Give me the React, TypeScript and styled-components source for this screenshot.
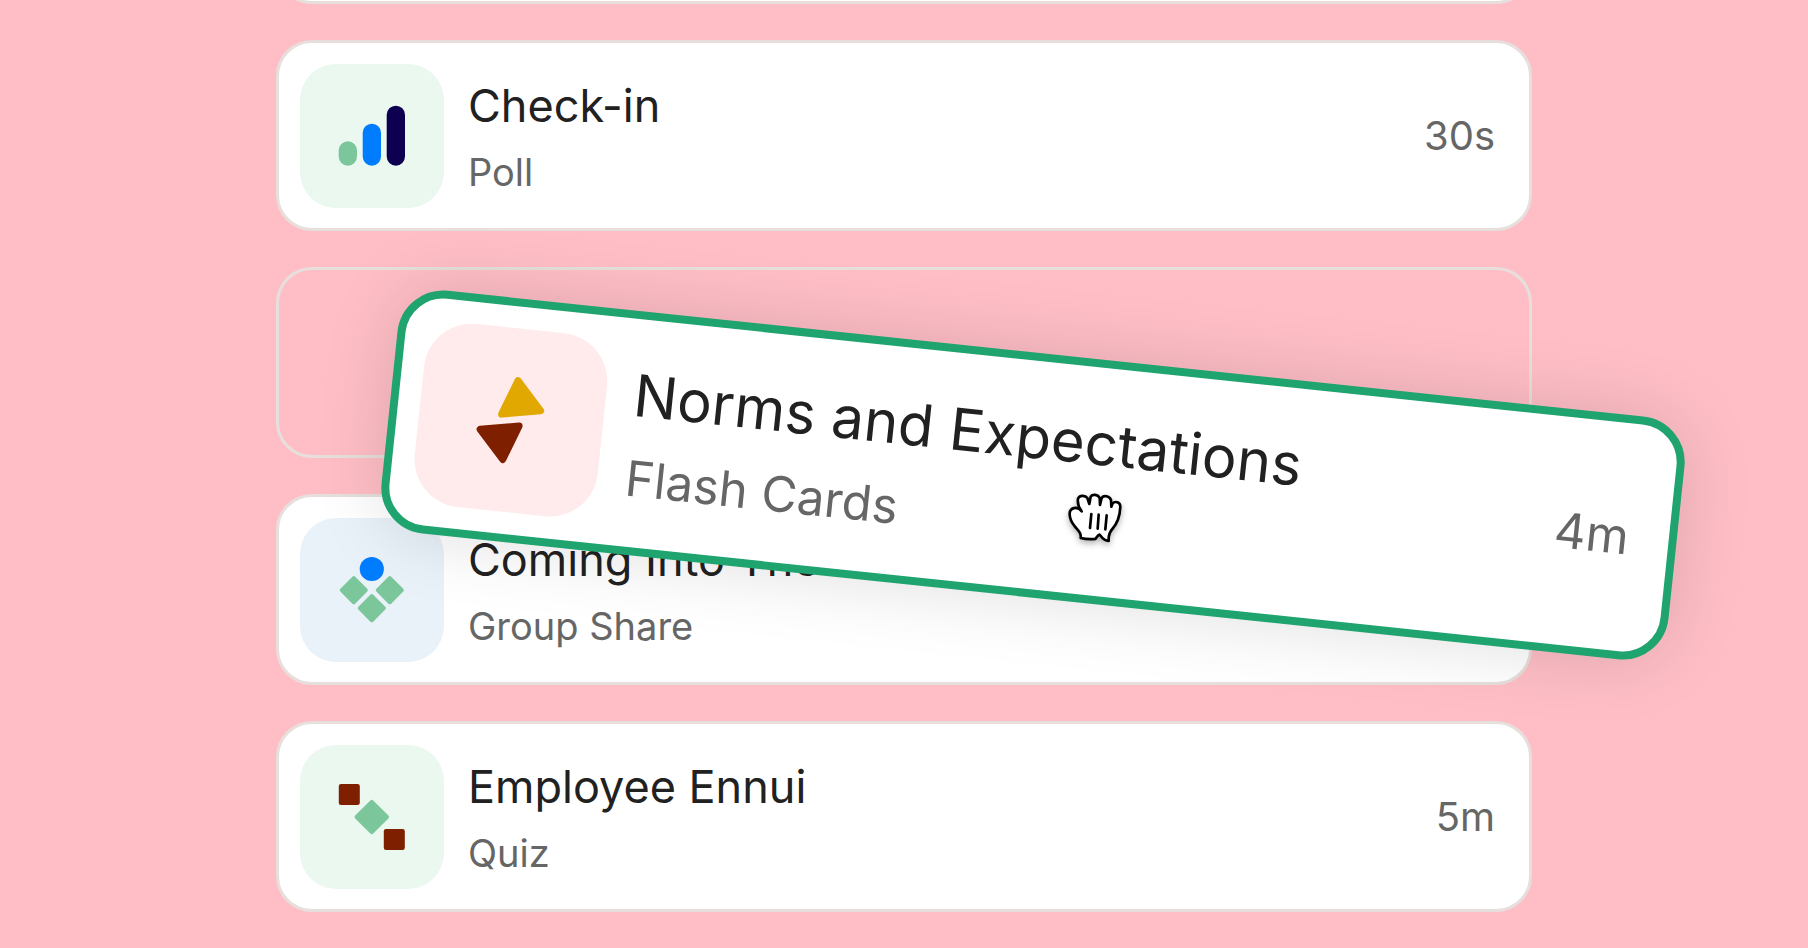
import React from "react";
import styled, { createGlobalStyle, css } from "styled-components";

const GlobalStyle = createGlobalStyle`
  *, *::before, *::after { box-sizing: border-box; }
  body {
    margin: 0;
    background: #ffbec6;
    color: #212121;
    font-family: Inter, "Liberation Sans", sans-serif;
  }
`;

const Stage = styled.main`
  display: flex;
  flex-direction: column;
  align-items: center;
  justify-content: flex-end;
  height: 100vh;
  padding-bottom: 36px;
  overflow: hidden;
`;

const AgendaList = styled.ul`
  display: flex;
  flex-direction: column;
  gap: 36px;
  width: 100%;
  max-width: 1256px;
  margin: 0;
  padding: 0;
  list-style: none;
`;

const frame = css`
  min-height: 191px;
  border: 3px solid #e6dfdc;
  border-radius: 36px;
`;

const Card = styled.li`
  ${frame}
  display: flex;
  flex: none;
  align-items: center;
  gap: 24px;
  padding: 20px 34px 20px 21px;
  background: #fff;
`;

const DropSlot = styled.li`
  ${frame}
  position: relative;
  z-index: 1;
  flex: none;
`;

const DraggedCard = styled.article`
  position: absolute;
  top: 83px;
  left: 107px;
  display: flex;
  align-items: center;
  gap: 28px;
  width: calc(100% + 44px);
  padding: 22px 40px 22px 22px;
  border: 8px solid #1fa36f;
  border-radius: 46px;
  background: #fff;
  box-shadow: 0 0 72px rgba(0, 0, 0, 0.13);
  transform: rotate(6deg);
`;

const Tile = styled.span<{ $tint: string; $large?: boolean }>`
  flex: none;
  width: ${(p) => (p.$large ? 184 : 144)}px;
  height: ${(p) => (p.$large ? 184 : 144)}px;
  border-radius: ${(p) => (p.$large ? 48 : 36)}px;
  background: ${(p) => p.$tint};

  svg {
    display: block;
    width: 100%;
    height: 100%;
  }
`;

const Labels = styled.div<{ $large?: boolean }>`
  display: flex;
  flex: 1;
  flex-direction: column;
  gap: ${(p) => (p.$large ? 18 : 14)}px;
  min-width: 0;
  padding-top: 2px;
  white-space: nowrap;
`;

const Title = styled.h2<{ $large?: boolean }>`
  margin: 0;
  font-size: ${(p) => (p.$large ? 58 : 45)}px;
  font-weight: 400;
  line-height: ${(p) => (p.$large ? 72 : 56)}px;
`;

const Kind = styled.p<{ $large?: boolean }>`
  margin: 0;
  color: #666;
  font-size: ${(p) => (p.$large ? 49 : 38)}px;
  line-height: ${(p) => (p.$large ? 60 : 48)}px;
`;

const Duration = styled.time<{ $large?: boolean }>`
  color: #666;
  font-size: ${(p) => (p.$large ? 49 : 40)}px;
  line-height: ${(p) => (p.$large ? 60 : 48)}px;
`;

const GrabHand = styled.svg`
  position: absolute;
  top: 210px;
  left: 771px;
  width: 90px;
  height: 80px;
  filter: drop-shadow(0 3px 3px rgba(0, 0, 0, 0.3));
`;

const PollIcon = () => (
  <svg viewBox="0 0 144 144" aria-hidden="true">
    <rect x="38.7" y="77.3" width="18.3" height="24.4" rx="9.1" fill="#7cc69b" />
    <rect x="62.7" y="59.7" width="18.3" height="42" rx="9.1" fill="#007dff" />
    <rect x="86.7" y="41.7" width="18.3" height="60" rx="9.1" fill="#0d0050" />
  </svg>
);

const Diamond = ({ x, y, side }: { x: number; y: number; side: number }) => (
  <rect
    x={x - side / 2}
    y={y - side / 2}
    width={side}
    height={side}
    rx="2"
    fill="#7cc69b"
    transform={`rotate(45 ${x} ${y})`}
  />
);

const GroupIcon = () => (
  <svg viewBox="0 0 144 144" aria-hidden="true">
    <circle cx="71.8" cy="51" r="12.1" fill="#007dff" />
    <Diamond x={53.8} y={72.2} side={21} />
    <Diamond x={89.8} y={72.2} side={21} />
    <Diamond x={71.8} y={90.2} side={21} />
  </svg>
);

const QuizIcon = () => (
  <svg viewBox="0 0 144 144" aria-hidden="true">
    <rect x="38.8" y="39" width="21" height="21" rx="2.2" fill="#7e1f00" />
    <rect x="83.8" y="84" width="21" height="21" rx="2.2" fill="#7e1f00" />
    <Diamond x={71.8} y={72} side={25.5} />
  </svg>
);

const FlashIcon = () => (
  <svg viewBox="-92 -92 184 184" strokeWidth="7" strokeLinejoin="round" aria-hidden="true">
    <path d="M3-40 28.6-12.4-9.8-5Z" fill="#e0a800" stroke="#e0a800" />
    <path d="M-4 40-29.6 12.4 8.8 5Z" fill="#7e1f00" stroke="#7e1f00" />
  </svg>
);

type Activity = {
  title: string;
  kind: string;
  duration?: string;
  tint: string;
  icon: React.ReactNode;
};

const ActivityContent = ({ item, large }: { item: Activity; large?: boolean }) => (
  <>
    <Tile $tint={item.tint} $large={large}>
      {item.icon}
    </Tile>
    <Labels $large={large}>
      <Title $large={large}>{item.title}</Title>
      <Kind $large={large}>{item.kind}</Kind>
    </Labels>
    {item.duration && <Duration $large={large}>{item.duration}</Duration>}
  </>
);

const checkIn: Activity = {
  title: "Check-in",
  kind: "Poll",
  duration: "30s",
  tint: "#eaf8ef",
  icon: <PollIcon />,
};
const norms: Activity = {
  title: "Norms and Expectations",
  kind: "Flash Cards",
  duration: "4m",
  tint: "#ffeaec",
  icon: <FlashIcon />,
};
const coming: Activity = {
  title: "Coming Into The",
  kind: "Group Share",
  tint: "#e9f1f9",
  icon: <GroupIcon />,
};
const ennui: Activity = {
  title: "Employee Ennui",
  kind: "Quiz",
  duration: "5m",
  tint: "#eaf8ef",
  icon: <QuizIcon />,
};

export default function App() {
  return (
    <>
      <GlobalStyle />
      <Stage>
        <AgendaList>
          <Card aria-hidden="true" />
          <Card>
            <ActivityContent item={checkIn} />
          </Card>
          <DropSlot>
            <DraggedCard>
              <ActivityContent item={norms} large />
            </DraggedCard>
            <GrabHand viewBox="570 420 270 240" aria-hidden="true">
              <path
                d="M665 514C657 500 636 500 630 514C626 530 633 545 645 560C657 574 664 580 662 594C678 598 694 598 706 597C711 592 713 584 719 584C724 588 728 602 746 603C745 588 747 578 757 567C775 547 780 525 781 500C781 485 764 483 758 490L754 500L753 480C748 466 730 466 725 474L720 495L719 474C714 462 697 462 692 470L688 492L682 474C676 465 658 465 654 476C652 488 657 503 665 514Z"
                fill="#fff"
                stroke="#000"
                strokeWidth="8"
                strokeLinejoin="round"
              />
              <path
                d="M694 522 690 564M716 524 713 566M740 526 736 568"
                fill="none"
                stroke="#000"
                strokeWidth="8"
                strokeLinecap="round"
              />
            </GrabHand>
          </DropSlot>
          <Card>
            <ActivityContent item={coming} />
          </Card>
          <Card>
            <ActivityContent item={ennui} />
          </Card>
        </AgendaList>
      </Stage>
    </>
  );
}
